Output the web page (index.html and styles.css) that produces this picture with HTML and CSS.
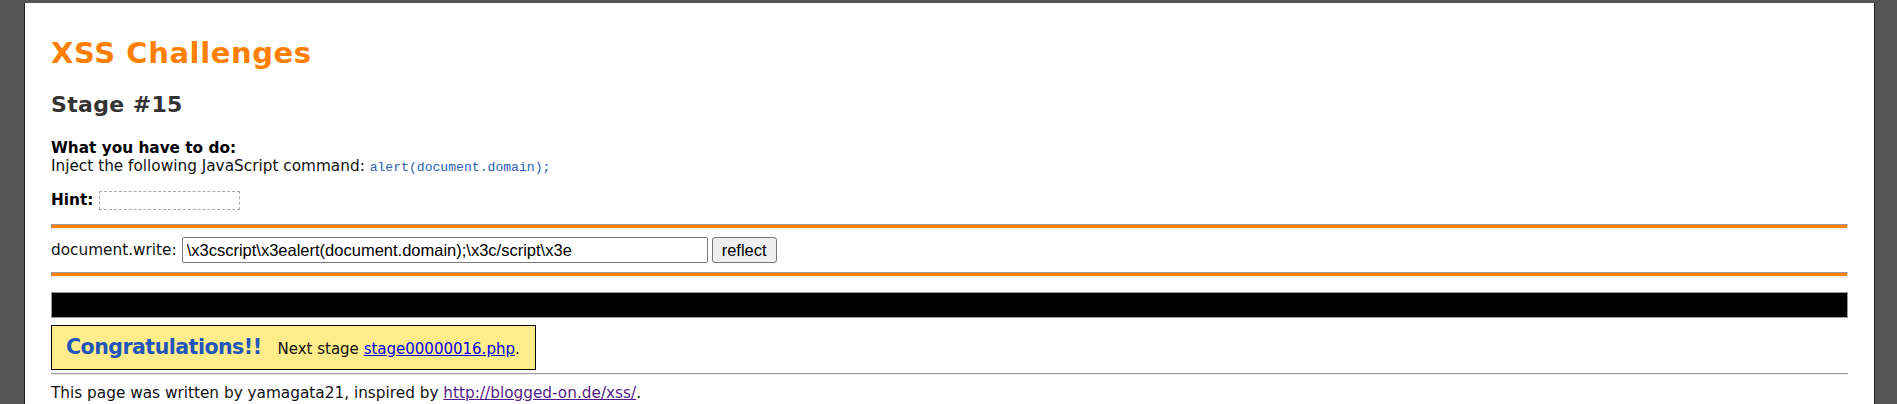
FILE: index.html
```html
<!DOCTYPE html>
<html>
<head>
<meta charset="utf-8">
<title>XSS Challenges</title>
<link rel="stylesheet" href="styles.css">
</head>
<body>
<div class="page">
  <h1 class="title">XSS Challenges</h1>
  <h2 class="stage">Stage #15</h2>
  <div class="task">
    <div class="task-head">What you have to do:</div>
    <div class="task-line">Inject the following JavaScript command: <code class="cmd">alert(document.domain);</code></div>
  </div>
  <div class="hint-row">
    <span class="hint-label">Hint:</span>
    <span class="hint-box"></span>
  </div>
  <div class="rule"></div>
  <form class="write-row">
    <span class="write-label">document.write:</span>
    <input class="write-input" type="text" value="\x3cscript\x3ealert(document.domain);\x3c/script\x3e">
    <button class="write-btn" type="button">reflect</button>
  </form>
  <div class="rule rule-second"></div>
  <div class="output"></div>
  <div class="congrats">
    <span class="congrats-title">Congratulations!!</span>
    <span class="congrats-next">Next stage <a class="next-link" href="#">stage00000016.php</a>.</span>
  </div>
  <div class="sep"></div>
  <div class="footer">This page was written by yamagata21, inspired by <a class="foot-link" href="#">http://blogged-on.de/xss/</a>.</div>
</div>
</body>
</html>
```

FILE: styles.css
```css
html, body {
  margin: 0;
  padding: 0;
}
body {
  background: #555555;
  font-family: "DejaVu Sans", Verdana, sans-serif;
  font-size: 15.3px;
  color: #111;
  padding-top: 3px;
  height: 401px;
  overflow: hidden;
}
.page {
  margin: 0 22px 0 24px;
  background: #fff;
  border-left: 1px solid #1e1e1e;
  border-right: 1px solid #1e1e1e;
  padding: 33px 26px 20px 26px;
  min-height: 400px;
  box-sizing: border-box;
}
.title {
  margin: 0;
  font-size: 29px;
  letter-spacing: 0.6px;
  line-height: 34px;
  font-weight: bold;
  color: #ff8000;
}
.stage {
  margin: 21px 0 0 0;
  font-size: 22px;
  letter-spacing: 0.35px;
  line-height: 28px;
  font-weight: bold;
  color: #333;
}
.task {
  margin-top: 20px;
  line-height: 18px;
}
.task-head {
  font-weight: bold;
  color: #000;
}
.cmd {
  font-family: "Liberation Mono", "DejaVu Sans Mono", monospace;
  font-size: 13.1px;
  color: #2b5fb4;
}
.hint-row {
  margin-top: 13px;
  display: flex;
  align-items: center;
  gap: 6px;
  height: 20px;
}
.hint-label {
  font-weight: bold;
  color: #000;
}
.hint-box {
  width: 141px;
  height: 19px;
  box-sizing: border-box;
  border: 1px dashed #aaa;
}
.rule {
  margin-top: 14px;
  height: 3px;
  background: #ff8000;
  border-top: 1px solid #999;
  border-left: 1px solid #999;
  border-right: 1px solid #e6e6e6;
  border-bottom: 1px solid #f0f0f0;
}
.write-row {
  margin: 8px 0 0 0;
  display: flex;
  align-items: center;
  height: 26px;
}
.write-label {
  margin-right: 5px;
}
.write-input {
  width: 526px;
  height: 26px;
  box-sizing: border-box;
  border: 1px solid #7a7a7a;
  border-radius: 2px;
  padding: 0 4px;
  font-family: "Liberation Sans", Arial, sans-serif;
  font-size: 16.5px;
  color: #000;
  margin: 0;
}
.write-btn {
  margin-left: 4px;
  width: 65px;
  height: 26px;
  box-sizing: border-box;
  border: 1px solid #767676;
  border-radius: 3px;
  background: #efefef;
  font-family: "Liberation Sans", Arial, sans-serif;
  font-size: 16.5px;
  color: #000;
  padding: 0;
}
.rule-second {
  margin-top: 9px;
}
.output {
  margin-top: 15px;
  height: 24px;
  background: #000;
  border: 1px solid #999;
}
.congrats {
  margin-top: 7px;
  display: inline-flex;
  align-items: baseline;
  gap: 16px;
  height: 43px;
  line-height: 43px;
  padding: 0 15px 0 14px;
  background: #ffec8b;
  border: 1px solid #000;
}
.congrats-title {
  font-size: 20.5px;
  letter-spacing: -0.5px;
  font-weight: bold;
  color: #2255bb;
}
.congrats-next {
  font-size: 15px;
  color: #111;
}
.next-link {
  color: #0000ee;
}
.sep {
  margin-top: 3px;
  height: 0;
  border-top: 1px solid #999;
  border-bottom: 1px solid #eee;
}
.footer {
  margin-top: 9px;
  line-height: 18px;
  color: #111;
}
.foot-link {
  color: #551a8b;
}
```
